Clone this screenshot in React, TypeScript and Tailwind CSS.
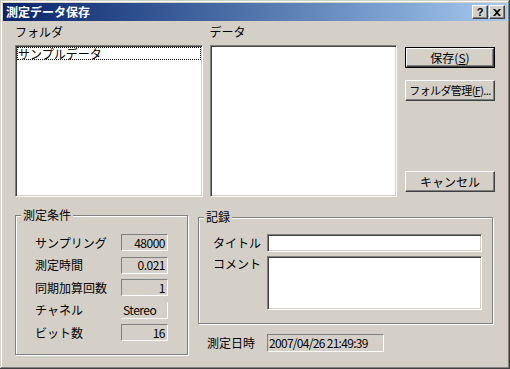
import React from "react";

const font = { fontFamily: '"Noto Sans CJK JP", "Noto Sans", sans-serif' };

const raised =
  "border border-t-white border-l-white border-r-[#404040] border-b-[#404040] shadow-[inset_-1px_-1px_0_#808080]";
const sunken2 =
  "border border-t-[#808080] border-l-[#808080] border-r-white border-b-white shadow-[inset_1px_1px_0_#404040,inset_-1px_-1px_0_#d4d0c8]";
const sunken1 = "border border-t-[#808080] border-l-[#808080] border-r-white border-b-white";

function Btn({ children, def, small }: { children: React.ReactNode; def?: boolean; small?: boolean }) {
  return (
    <div className={`h-[21px] w-[90px] ${def ? "border border-black" : ""}`}>
      <div
        className={`flex h-full w-full items-center justify-center whitespace-nowrap leading-none text-black ${
          small ? "text-[11px] tracking-[-0.6px]" : "text-[12px]"
        } ${raised}`}
      >
        {children}
      </div>
    </div>
  );
}

function Group({ label, className, children }: { label: string; className: string; children: React.ReactNode }) {
  return (
    <div className={`relative border border-[#808080] shadow-[inset_1px_1px_0_#fff,1px_1px_0_#fff] ${className}`}>
      <span className="absolute -top-[8px] left-[5px] bg-[#d4d0c8] px-[2px] text-[12px] leading-[14px]">{label}</span>
      {children}
    </div>
  );
}

const conditions = [
  { label: "サンプリング", value: "48000" },
  { label: "測定時間", value: "0.021" },
  { label: "同期加算回数", value: "1" },
  { label: "チャネル", value: "Stereo", flat: true },
  { label: "ビット数", value: "16" },
];

export default function App() {
  return (
    <div
      className="flex h-[369px] w-[510px] flex-col bg-[#d4d0c8] p-[3px] text-black shadow-[inset_-1px_-1px_0_#404040,inset_1px_1px_0_#d4d0c8,inset_-2px_-2px_0_#808080,inset_2px_2px_0_#fff]"
      style={font}
    >
      {/* Title bar */}
      <div className="flex h-[18px] items-center bg-gradient-to-r from-[#0a246a] to-[#a6caf0] pl-[3px] pr-[2px]">
        <span className="text-[12px] font-bold leading-none text-white">測定データ保存</span>
        <div className="ml-auto flex">
          <div className={`flex h-[14px] w-[16px] items-center justify-center bg-[#d4d0c8] ${raised}`}>
            <span className="text-[11px] font-bold leading-none" style={{ fontFamily: '"Liberation Sans", sans-serif' }}>
              ?
            </span>
          </div>
          <div className={`ml-[1px] flex h-[14px] w-[16px] items-center justify-center bg-[#d4d0c8] ${raised}`}>
            <svg width="8" height="7" viewBox="0 0 8 7">
              <path d="M0 0h2l2 2 2-2h2L5 3.5 8 7H6L4 5 2 7H0l3-3.5z" fill="#000" />
            </svg>
          </div>
        </div>
      </div>

      <div className="flex flex-col px-[12px]">
        {/* Top row */}
        <div className="flex items-start">
          <div className="flex w-[189px] flex-col">
            <div className="mt-[4px] h-[14px] text-[12px] leading-[14px]">フォルダ</div>
            <div className={`mt-[6px] h-[152px] bg-white p-[1px] ${sunken2}`}>
              <div className="h-[13px] border border-dotted border-black text-[12px] leading-[11px]">サンプルデータ</div>
            </div>
          </div>
          <div className="ml-[7px] flex w-[189px] flex-col">
            <div className="mt-[4px] h-[14px] text-[12px] leading-[14px]">データ</div>
            <div className={`mt-[6px] h-[152px] bg-white ${sunken2}`} />
          </div>
          <div className="ml-[8px] flex flex-col pt-[26px]">
            <Btn def>
              保存(<span className="underline">S</span>)
            </Btn>
            <div className="mt-[12px]">
              <Btn small>
                フォルダ管理(<span className="underline">F</span>)...
              </Btn>
            </div>
            <div className="mt-[70px]">
              <Btn>キャンセル</Btn>
            </div>
          </div>
        </div>

        {/* Bottom row */}
        <div className="flex items-start">
          <Group label="測定条件" className="mt-[18px] h-[140px] w-[173px]">
            <div className="flex flex-col gap-[5.5px] pl-[19px] pt-[18px]">
              {conditions.map((c) => (
                <div key={c.label} className="flex h-[17px] items-center">
                  <span className="w-[86px] text-[12px] leading-none">{c.label}</span>
                  <div
                    className={`flex h-[17px] w-[47px] items-center text-[12px] leading-none tracking-[-0.5px] ${
                      c.flat
                        ? "border border-t-[#d4d0c8] border-l-[#d4d0c8] border-r-white border-b-white pl-[1px]"
                        : `${sunken1} justify-end pr-[2px]`
                    }`}
                  >
                    {c.value}
                  </div>
                </div>
              ))}
            </div>
          </Group>

          <div className="ml-[10px] flex flex-col">
            <Group label="記録" className="mt-[20px] h-[107px] w-[295px]">
              <div className="flex flex-col gap-[4px] pl-[14px] pt-[16px]">
                <div className="flex items-center">
                  <span className="w-[54px] text-[12px] leading-none">タイトル</span>
                  <div className={`h-[18px] w-[215px] bg-white ${sunken2}`} />
                </div>
                <div className="flex items-start">
                  <span className="mt-[2px] w-[54px] text-[12px] leading-none">コメント</span>
                  <div className={`h-[54px] w-[215px] bg-white ${sunken2}`} />
                </div>
              </div>
            </Group>
            <div className="mt-[10px] flex items-center pl-[9px]">
              <span className="w-[60px] text-[12px] leading-none">測定日時</span>
              <div className={`flex h-[18px] w-[117px] items-center whitespace-nowrap pl-[1px] text-[12px] leading-none tracking-[-0.7px] ${sunken1}`}>
                2007/04/26 21:49:39
              </div>
            </div>
          </div>
        </div>
      </div>
    </div>
  );
}
